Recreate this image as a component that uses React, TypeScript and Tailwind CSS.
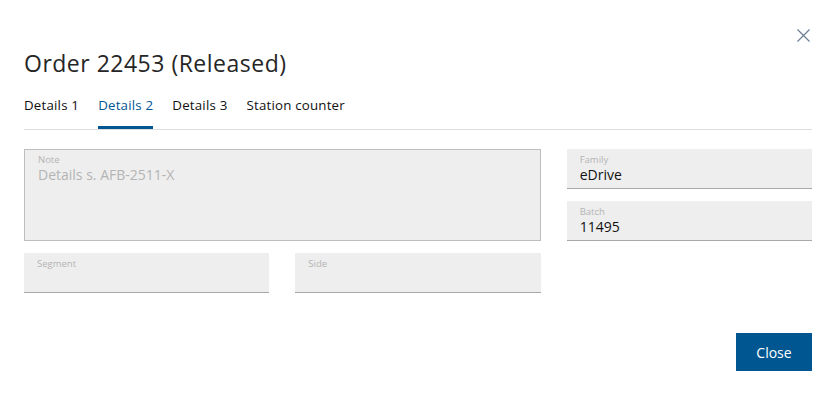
import React from "react";

const tabs = ["Details 1", "Details 2", "Details 3", "Station counter"];

const Field = ({ label, value }: { label: string; value?: string }) => (
  <div className="h-[40px] bg-[#eeeeee] border-b border-[#a8a8a8] px-[13px] pt-[5px]">
    <div className="text-[9.5px] leading-[12px] text-[#b4b4b4]">{label}</div>
    <div className="text-[14px] leading-[17px] text-[#111]">{value}</div>
  </div>
);

const OrderDialog = () => {
  const active = "Details 2";

  return (
    <div
      className="relative w-[838px] h-[396px] bg-white"
      style={{ fontFamily: '"Open Sans", "Noto Sans", Arial, sans-serif' }}
    >
      <button className="absolute right-[28px] top-[29px] text-[#6d7f94]">
        <svg width="13" height="13" viewBox="0 0 13 13" fill="none">
          <path d="M0.5 0.5L12.5 12.5M12.5 0.5L0.5 12.5" stroke="currentColor" strokeWidth="1.2" />
        </svg>
      </button>

      <div className="pl-6 pr-[26px] pt-[49px]">
        <h1 className="text-[23px] leading-[28px] text-[#262626] tracking-[0.5px]">
          Order 22453 (Released)
        </h1>

        <div className="mt-[13px] flex gap-[19px] border-b border-[#dedede]">
          {tabs.map((tab) => (
            <div
              key={tab}
              className={
                tab === active
                  ? "pt-[5px] pb-[11px] border-b-[3px] border-[#005691] text-[13.3px] leading-[20px] tracking-[0.2px] text-[#005691]"
                  : "pt-[5px] pb-[11px] border-b-[3px] border-transparent text-[13.3px] leading-[20px] tracking-[0.2px] text-[#111]"
              }
            >
              {tab}
            </div>
          ))}
        </div>

        <div className="mt-[19px] grid grid-cols-3 gap-x-[26px] gap-y-[12px] auto-rows-[40px]">
          <div className="col-span-2 row-span-2 bg-[#eeeeee] border border-[#bdbdbd] px-[13px] pt-[4px]">
            <div className="text-[9.5px] leading-[12px] text-[#b4b4b4]">Note</div>
            <div className="text-[14px] leading-[18px] text-[#b4b4b4]">Details s. AFB-2511-X</div>
          </div>
          <Field label="Family" value="eDrive" />
          <Field label="Batch" value="11495" />
          <Field label="Segment" />
          <Field label="Side" />
        </div>

        <div className="mt-[40px] flex justify-end">
          <button className="w-[76px] h-[38px] bg-[#005691] text-white text-[14px]">Close</button>
        </div>
      </div>
    </div>
  );
};

export default OrderDialog;
